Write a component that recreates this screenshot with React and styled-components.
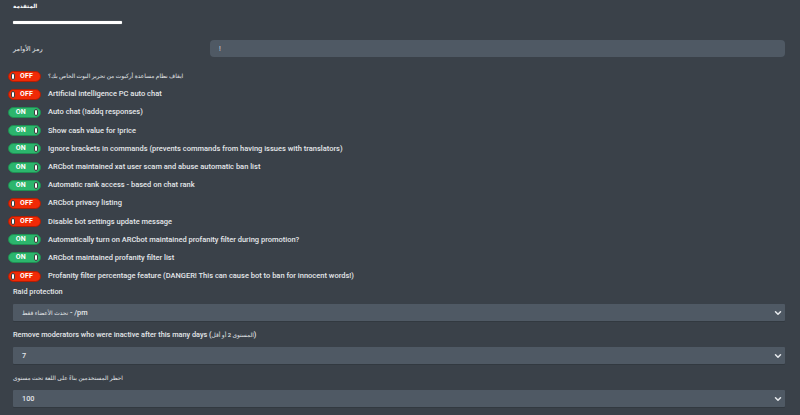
import React from "react";
import styled, { createGlobalStyle } from "styled-components";

const Global = createGlobalStyle`
  html, body { margin: 0; padding: 0; background: #3a4149; }
  body { font-family: Roboto, "DejaVu Sans", sans-serif; color: #e4e7ea; }
  * { box-sizing: border-box; }
`;

const Page = styled.div`
  width: 800px;
  height: 415px;
  overflow: hidden;
  background: #3a4149;
  padding: 0 15px 0 13px;
  display: flex;
  flex-direction: column;
`;

const Title = styled.div`
  font-size: 7px;
  font-weight: 700;
  line-height: 10px;
  margin-top: 1px;
  color: #ffffff;
`;

const Underline = styled.div`
  width: 109px;
  height: 3px;
  margin-top: 10px;
  background: #ffffff;
  border-radius: 1px;
  box-shadow: 0 0 1px rgba(255, 255, 255, 0.6);
`;

const FieldRow = styled.div`
  display: grid;
  grid-template-columns: 197px 1fr;
  align-items: center;
  margin-top: 16px;
`;

const Label = styled.div`
  font-size: 7.3px;
  font-weight: ${(p) => (p.$bold ? 500 : 400)};
  line-height: 10px;
  color: #e4e7ea;
`;

const Ar = styled.span`
  font-size: ${(p) => p.$scale || 0.8}em;
`;

const TextInput = styled.input`
  height: 17px;
  border: none;
  border-radius: 4px;
  background: #4f5964;
  color: #d8dce0;
  font-family: Roboto, "DejaVu Sans", sans-serif;
  font-size: 7px;
  padding: 0 9px;
  outline: none;
`;

const ToggleList = styled.div`
  display: flex;
  flex-direction: column;
  margin-top: 10px;
  margin-left: -5px;
`;

const ToggleRow = styled.div`
  display: flex;
  align-items: center;
  gap: 7px;
  height: 18.2px;
`;

const Switch = styled.div`
  width: 33px;
  height: 11px;
  border-radius: 6px;
  background: ${(p) => (p.$on ? "#2cb66d" : "#f02a06")};
  border: 1px solid ${(p) => (p.$on ? "#1f8f52" : "#b11e05")};
  display: flex;
  align-items: center;
  flex-direction: ${(p) => (p.$on ? "row-reverse" : "row")};
  padding: 0 2px;
  gap: ${(p) => (p.$on ? "8px" : "5px")};
  flex-shrink: 0;
`;

const Knob = styled.span`
  width: 4px;
  height: 7px;
  border-radius: 2px;
  background: #ffffff;
  border: 1px solid #3c3c3c;
  flex-shrink: 0;
`;

const SwitchText = styled.span`
  font-size: 7px;
  font-weight: 700;
  color: #ffffff;
  line-height: 9px;
  letter-spacing: 0.2px;
`;

const RowLabel = styled.span`
  font-size: 7.5px;
  font-weight: 500;
  color: #e4e7ea;
  line-height: 10px;
  white-space: nowrap;
`;

const SelectGroup = styled.div`
  display: flex;
  flex-direction: column;
  gap: 7px;
  margin-top: ${(p) => p.$mt}px;
`;

const SelectBox = styled.div`
  height: 17px;
  background: #4f5964;
  border-radius: 1px;
  box-shadow: 0 1px 0 rgba(0, 0, 0, 0.12);
  display: flex;
  align-items: center;
  justify-content: space-between;
  padding: 0 3px 0 9px;
  font-size: 7.3px;
  font-weight: 500;
  color: #e4e7ea;
`;

const Chevron = () => (
  <svg width="8" height="6" viewBox="0 0 8 6">
    <path d="M1.5 1.8 L4 4.3 L6.5 1.8" stroke="#e8ebee" strokeWidth="1.5" fill="none" strokeLinecap="round" strokeLinejoin="round" />
  </svg>
);

const toggles = [
  [false, <Ar $scale={0.78}>ايقاف نظام مساعدة أركبوت من تحرير البوت الخاص بك؟</Ar>],
  [false, "Artificial intelligence PC auto chat"],
  [true, "Auto chat (!addq responses)"],
  [true, "Show cash value for !price"],
  [true, "Ignore brackets in commands (prevents commands from having issues with translators)"],
  [true, "ARCbot maintained xat user scam and abuse automatic ban list"],
  [true, "Automatic rank access - based on chat rank"],
  [false, "ARCbot privacy listing"],
  [false, "Disable bot settings update message"],
  [true, "Automatically turn on ARCbot maintained profanity filter during promotion?"],
  [true, "ARCbot maintained profanity filter list"],
  [false, "Profanity filter percentage feature (DANGER! This can cause bot to ban for innocent words!)"],
];

const selects = [
  ["Raid protection", <><Ar>تحدث الأعضاء فقط</Ar> - /pm</>, 2],
  [<>Remove moderators who were inactive after this many days (<Ar>المستوى 2 أو أقل</Ar>)</>, "7", 9],
  [<Ar>احظر المستخدمين بناءً على اللغة تحت مستوى</Ar>, "100", 9],
];

export default function App() {
  return (
    <>
      <Global />
      <Page>
        <Title><Ar>المتقدمة</Ar></Title>
        <Underline />
        <FieldRow>
          <Label><Ar $scale={0.9}>رمز الأوامر</Ar></Label>
          <TextInput defaultValue="!" />
        </FieldRow>
        <ToggleList>
          {toggles.map(([on, text], i) => (
            <ToggleRow key={i}>
              <Switch $on={on}>
                <Knob />
                <SwitchText>{on ? "ON" : "OFF"}</SwitchText>
              </Switch>
              <RowLabel>{text}</RowLabel>
            </ToggleRow>
          ))}
        </ToggleList>
        {selects.map(([label, value, mt], i) => (
          <SelectGroup key={i} $mt={mt}>
            <Label $bold>{label}</Label>
            <SelectBox>
              <span>{value}</span>
              <Chevron />
            </SelectBox>
          </SelectGroup>
        ))}
      </Page>
    </>
  );
}
